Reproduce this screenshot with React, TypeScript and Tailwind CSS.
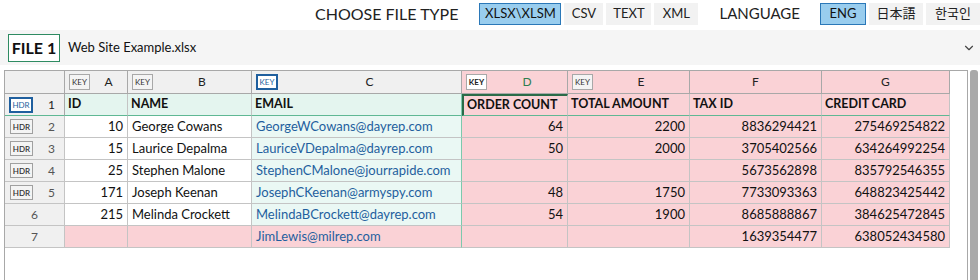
import React from "react";
import { ChevronDown } from "lucide-react";

const COLS = [
  { letter: "A", key: "gray" },
  { letter: "B", key: "gray" },
  { letter: "C", key: "blue" },
  { letter: "D", key: "bold" },
  { letter: "E", key: "gray" },
  { letter: "F", key: "" },
  { letter: "G", key: "" },
];

const HEADERS = ["ID", "NAME", "EMAIL", "ORDER COUNT", "TOTAL AMOUNT", "TAX ID", "CREDIT CARD"];

const ROWS: { n: number; hdr: boolean; cells: string[] }[] = [
  { n: 2, hdr: true, cells: ["10", "George Cowans", "GeorgeWCowans@dayrep.com", "64", "2200", "8836294421", "275469254822"] },
  { n: 3, hdr: true, cells: ["15", "Laurice Depalma", "LauriceVDepalma@dayrep.com", "50", "2000", "3705402566", "634264992254"] },
  { n: 4, hdr: true, cells: ["25", "Stephen Malone", "StephenCMalone@jourrapide.com", "", "", "5673562898", "835792546355"] },
  { n: 5, hdr: true, cells: ["171", "Joseph Keenan", "JosephCKeenan@armyspy.com", "48", "1750", "7733093363", "648823425442"] },
  { n: 6, hdr: false, cells: ["215", "Melinda Crockett", "MelindaBCrockett@dayrep.com", "54", "1900", "8685888867", "384625472845"] },
  { n: 7, hdr: false, cells: ["", "", "JimLewis@milrep.com", "", "", "1639354477", "638052434580"] },
];

const KeyBadge = ({ kind }: { kind: string }) => {
  if (kind === "blue")
    return (
      <span className="flex h-[16px] w-[22px] items-center justify-center border-2 border-[#1f5f9e] bg-white text-[8px] text-[#1f5f9e]">
        KEY
      </span>
    );
  if (kind === "bold")
    return (
      <span className="flex h-[16px] w-[21px] items-center justify-center border border-[#a8a8a8] bg-white text-[8px] font-bold text-[#222]">
        KEY
      </span>
    );
  return (
    <span className="flex h-[16px] w-[21px] items-center justify-center border border-[#a8a8a8] bg-[#f4f4f4] text-[8px] text-[#333]">
      KEY
    </span>
  );
};

const HdrBadge = ({ active }: { active?: boolean }) =>
  active ? (
    <span className="flex h-[16px] w-[24px] items-center justify-center border-2 border-[#1f5f9e] bg-white text-[8px] text-[#1f5f9e]">
      HDR
    </span>
  ) : (
    <span className="flex h-[15px] w-[23px] items-center justify-center border border-[#a0a0a0] bg-[#f4f4f4] text-[8px] font-semibold text-[#333]">
      HDR
    </span>
  );

const TopButton = ({ label, active, w }: { label: string; active?: boolean; w: string }) => (
  <div
    className={`flex h-[22px] items-center justify-center text-[13px] ${w} ${
      active ? "border border-[#2b78b8] bg-[#99cdee] text-[#111]" : "bg-[#f2f2f2] text-[#222]"
    }`}
  >
    {label}
  </div>
);

const cellBg = (col: number, row: number) => {
  if (row === 7) return "bg-[#fad2d6]";
  if (col >= 3) return "bg-[#fad2d6]";
  if (col === 2) return "bg-[#eaf8f4]";
  return "bg-white";
};

export default function App() {
  return (
    <div
      className="h-[280px] w-[980px] overflow-hidden bg-white text-[#222]"
      style={{ fontFamily: 'Lato, "Noto Sans CJK KR", "Noto Sans CJK JP", sans-serif' }}
    >
      {/* top bar */}
      <div className="flex h-[30px] items-center justify-end pb-[3px]">
        <span className="mr-[21px] text-[16px] text-[#222]">CHOOSE FILE TYPE</span>
        <div className="flex gap-[3px]">
          <TopButton label="XLSX\XLSM" active w="w-[82px]" />
          <TopButton label="CSV" w="w-[39px]" />
          <TopButton label="TEXT" w="w-[45px]" />
          <TopButton label="XML" w="w-[44px]" />
        </div>
        <span className="ml-[21px] mr-[20px] text-[15px] text-[#222]">LANGUAGE</span>
        <div className="flex gap-[3px]">
          <TopButton label="ENG" active w="w-[46px]" />
          <TopButton label="日本語" w="w-[54px]" />
          <TopButton label="한국인" w="w-[54px]" />
        </div>
      </div>

      {/* file bar */}
      <div className="flex h-[35px] items-center bg-[#f5f5f5] pl-[8px] pr-[4px]">
        <div className="flex h-[28px] w-[52px] items-center justify-center border border-[#2e8b62] bg-white text-[16px] font-bold text-[#111]">
          FILE 1
        </div>
        <span className="ml-[8px] text-[13px] text-[#111]">Web Site Example.xlsx</span>
        <ChevronDown className="ml-auto text-[#444]" size={14} strokeWidth={2} />
      </div>

      {/* table area */}
      <div className="mt-[5px] flex">
        <div className="ml-[4px] h-[215px] w-[964px] border-l border-t border-r border-[#a8a8a8]">
          <div className="grid grid-cols-[60px_63px_124px_210px_106px_122px_132px_128px] text-[13px]">
            {/* column letters */}
            <div className="h-[23px] border-b border-r border-[#a8a8a8] bg-[#f0f0f0]" />
            {COLS.map((c, i) => (
              <div
                key={c.letter}
                className={`flex h-[23px] items-center border-b border-r border-[#a8a8a8] ${
                  i >= 3 ? "bg-[#fad2d6]" : "bg-[#f0f0f0]"
                } ${c.key ? "pl-[4px]" : ""}`}
              >
                {c.key && <KeyBadge kind={c.key} />}
                <span className={`flex-1 text-center text-[12px] ${c.letter === "D" ? "text-[#2e7d4f]" : "text-[#222]"}`}>
                  {c.letter}
                </span>
              </div>
            ))}

            {/* header row */}
            <div className="flex h-[22px] items-center border-b border-r border-b-[#5fb894] border-r-[#a8a8a8] bg-[#f0f0f0] pl-[4px]">
              <HdrBadge active />
              <span className="ml-[15px] text-[12px]">1</span>
            </div>
            {HEADERS.map((h, i) => (
              <div
                key={h}
                className={`flex h-[22px] items-center border-b border-r border-b-[#5fb894] pl-[3px] text-[12.5px] font-bold text-[#111] ${
                  i >= 3 ? "bg-[#fad2d6]" : "bg-[#e4f5ef]"
                } ${i === 2 ? "border-r-[#7cc9ad]" : "border-r-[#c4c4c4]"} ${
                  i === 3 ? "border-2 border-[#2a6b48]" : ""
                }`}
              >
                {h}
              </div>
            ))}

            {/* data rows */}
            {ROWS.map((r) => (
              <React.Fragment key={r.n}>
                <div
                  className={`flex h-[22px] items-center border-b border-r border-[#c4c4c4] bg-[#f0f0f0] text-[12px] text-[#555] ${
                    r.hdr ? "pl-[5px]" : "justify-center"
                  }`}
                >
                  {r.hdr && <HdrBadge />}
                  <span className={r.hdr ? "ml-[15px]" : ""}>{r.n}</span>
                </div>
                {r.cells.map((t, ci) => {
                  const right = ci === 0 || ci >= 3;
                  return (
                    <div
                      key={ci}
                      className={`flex h-[22px] items-center border-b border-r px-[4px] ${cellBg(ci, r.n)} ${
                        ci === 2 ? "border-b-[#c4c4c4] border-r-[#7cc9ad]" : "border-[#c4c4c4]"
                      } ${right ? "justify-end" : ""} ${ci === 2 ? "text-[#1f5f9e]" : "text-[#111]"}`}
                    >
                      {t}
                    </div>
                  );
                })}
              </React.Fragment>
            ))}
          </div>
        </div>
        <div className="ml-[2px] h-[215px] w-[8px] rounded-t-[3px] bg-[#a9a9a9]" />
      </div>
    </div>
  );
}
